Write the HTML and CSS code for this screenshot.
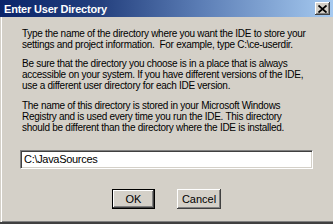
FILE: index.html
```html
<!DOCTYPE html>
<html>
<head>
<meta charset="utf-8">
<link rel="stylesheet" href="styles.css">
</head>
<body>
<div class="window">
  <div class="titlebar">
    <span class="title">Enter User Directory</span>
    <span class="close"><svg width="9" height="8" viewBox="0 0 9 8"><path d="M0.5 0.5 L8.5 7.5 M8.5 0.5 L0.5 7.5" stroke="#000" stroke-width="1.8"/></svg></span>
  </div>
  <div class="content">
    <p class="para p1">Type the name of the directory where you want the IDE to store your<br>settings and project information.&nbsp; For example, type C:\ce-userdir.</p>
    <p class="para p2">Be sure that the directory you choose is in a place that is always<br>accessible on your system. If you have different versions of the IDE,<br>use a different user directory for each IDE version.</p>
    <p class="para p3">The name of this directory is stored in your Microsoft Windows<br>Registry and is used every time you run the IDE. This directory<br>should be different than the directory where the IDE is installed.</p>
    <div class="field">C:\JavaSources</div>
    <div class="buttons">
      <div class="btn default"><span class="btn-face">OK</span></div>
      <div class="btn"><span class="btn-face">Cancel</span></div>
    </div>
  </div>
</div>
</body>
</html>
```

FILE: styles.css
```css
html, body {
  margin: 0;
  padding: 0;
  background: #d4d0c8;
}
.window {
  width: 333px;
  height: 224px;
  box-sizing: border-box;
  display: flex;
  flex-direction: column;
  overflow: hidden;
  border-bottom: 2px solid #404040;
  box-shadow: inset 1px 0 0 #d4d0c8, inset 2px 0 0 #ffffff, inset 0 -1px 0 #808080;
  font-family: "Liberation Sans", Arial, sans-serif;
  color: #000;
}
.titlebar {
  height: 17px;
  flex: none;
  display: flex;
  align-items: center;
  justify-content: space-between;
  background: linear-gradient(to right, #0a246a 0%, #24407e 30%, #5b7db5 60%, #a6caf0 100%);
}
.title {
  color: #fff;
  font-weight: bold;
  font-size: 11px;
  padding-left: 4px;
  letter-spacing: -0.2px;
}
.close {
  width: 15px;
  height: 13px;
  margin-right: 3px;
  box-sizing: border-box;
  background: #d4d0c8;
  display: flex;
  align-items: center;
  justify-content: center;
  box-shadow: inset -1px -1px 0 #404040, inset 1px 1px 0 #ffffff, inset -2px -2px 0 #808080;
}
.content {
  padding: 11px 20px 0 22px;
  display: flex;
  flex-direction: column;
}
.para {
  margin: 0;
  font-size: 10px;
  line-height: 11px;
  white-space: nowrap;
  letter-spacing: -0.28px;
}
.p1 {
  margin-bottom: 8px;
}
.p2 {
  margin-bottom: 9px;
}
.field {
  margin: 17px 0 0 -2px;
  width: 293px;
  height: 19px;
  flex: none;
  box-sizing: border-box;
  background: #fff;
  border-top: 1px solid #808080;
  border-left: 1px solid #808080;
  border-right: 1px solid #ffffff;
  border-bottom: 1px solid #ffffff;
  box-shadow: inset 1px 1px 0 #404040, inset -1px -1px 0 #d4d0c8;
  font-size: 11px;
  line-height: 17px;
  padding-left: 3px;
  letter-spacing: -0.3px;
}
.buttons {
  margin-top: 20px;
  display: flex;
  gap: 22px;
  padding-left: 90px;
}
.btn {
  width: 44px;
  height: 20px;
  box-sizing: border-box;
  background: #d4d0c8;
  box-shadow: inset -1px -1px 0 #404040, inset 1px 1px 0 #ffffff, inset -2px -2px 0 #808080;
  display: flex;
  align-items: center;
  justify-content: center;
  font-size: 11px;
}
.btn.default {
  width: 43px;
  border: 1px solid #000;
}
```
